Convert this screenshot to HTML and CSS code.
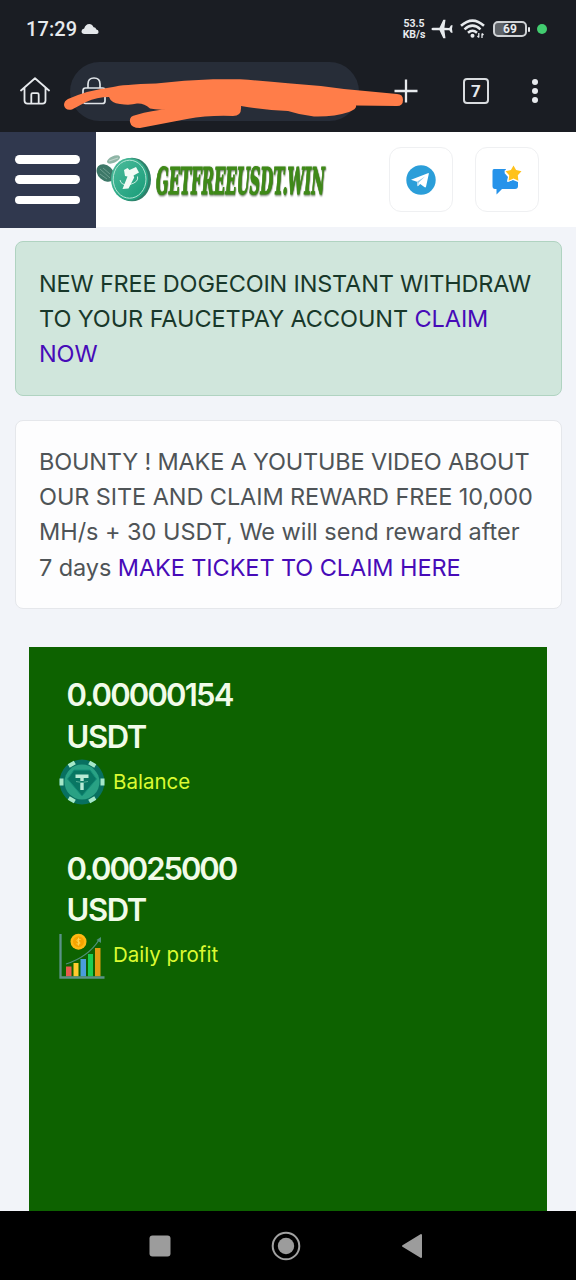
FILE: index.html
```html
<!DOCTYPE html>
<html lang="en">
<head>
<meta charset="utf-8">
<title>GetFreeUSDT.win</title>
<link rel="stylesheet" href="styles.css">
</head>
<body>
<div class="phone">
  <header class="browser">
    <div class="status">
      <span class="clock">17:29</span>
      <svg class="cloud" width="18" height="12" viewBox="0 0 18 12"><path d="M3.500 11Q.5 11 .5 8.300Q.5 6 3.200 5.500Q4.500 1 8.300 1Q11 1 12.600 4.200Q14.500 4 15.400 6.600Q17.600 7 17.600 9Q17.600 11 15.500 11Z" fill="#e4e7ea"/></svg>
      <span class="speed"><span>53.5</span><span>KB/s</span></span>
      <svg class="plane" width="22" height="20" viewBox="0 0 22 20"><path d="M.5 10Q.5 8.800 2 8.700H8.500L12.300 .7H14.500L13.400 8.700L18.300 8.900L20 6.300H21.600L21 10L21.600 13.700H20L18.300 11.200L13.400 11.300L14.500 19.300H12.300L8.500 11.300H2Q.5 11.200.5 10Z" fill="#e7eaed"/></svg>
      <svg class="wifi" width="26" height="20" viewBox="0 0 26 20" fill="none" stroke="#e7eaed" stroke-width="2.500"><path d="M1 6.800Q12.500-3.600 24 6.800M4.500 10.300Q12.500 3 20.500 10.300M8 13.700Q12.500 9.700 17 13.700"/><circle cx="12.500" cy="16.700" r="2" fill="#e7eaed" stroke="none"/><path d="M18.800 14V18.500M22 19V14.500M17.500 16.800L18.800 18.500M22 14.500L23.500 16" stroke-width="1.300"/></svg>
      <span class="battery">69</span>
      <span class="privacy"></span>
    </div>
    <div class="toolbar">
      <svg class="home" width="30" height="28" viewBox="0 0 30 28" fill="none" stroke="#e7eaed" stroke-width="1.800" stroke-linejoin="round" stroke-linecap="round"><path d="M1 13.500L15 1.200L29 13.500M4.500 11V23.500Q4.500 26.600 7.600 26.600H22.400Q25.500 26.600 25.500 23.500V11M11.300 26V17.500Q11.300 16.200 12.600 16.200H17.400Q18.700 16.200 18.700 17.500V26"/></svg>
      <div class="address">
        <svg width="24" height="28" viewBox="0 0 24 28" fill="none" stroke="#e0e4e8" stroke-width="1.700"><rect x="1" y="11" width="22" height="15.500" rx="2.500"/><path d="M6 11V7Q6 1 12 1Q18 1 18 7V11"/></svg>
      </div>
      <svg class="plus" width="24" height="24" viewBox="0 0 24 24" stroke="#e7eaed" stroke-width="2.300"><path d="M.5 12H23.500M12 .5V23.500"/></svg>
      <span class="tabs">7</span>
      <span class="dots"><i></i><i></i><i></i></span>
    </div>
    <svg class="scribble" width="350" height="56" viewBox="0 0 350 56"><path d="M4 23Q24 14 49 11Q58 8.500 92 7.500Q120 4 149 3.200H176Q202 5 224 7.200Q252 9 280 13L333 18Q339 18 339 24Q339 30 333 30L292 29.500Q293 33 285 36Q270 41 250 40.500Q236 39 224 35Q202 34 177 30Q178 40 169 40Q145 39 123 43L76 52Q67 52 66 46Q65 40 72 39Q88 34 103 33.500Q92 34 86 32.500Q80 27 73 27.500Q66 29.500 56 28Q47 27 45 21Q33 21 22 26L8 33.500Q1 35 0 29Q0 25 4 23Z" fill="#ff7d49"/></svg>
  </header>

  <div class="site-header">
    <div class="menu"><i></i><i></i><i></i></div>
    <div class="logo">
      <svg class="coin" width="58" height="52" viewBox="0 0 58 52">
        <defs><linearGradient id="coin" x1="0" y1="0" x2="1" y2="1"><stop offset="0" stop-color="#4fbd9d"/><stop offset="1" stop-color="#159a76"/></linearGradient></defs>
        <ellipse cx="17.500" cy="5.500" rx="7" ry="3.300" transform="rotate(-24 17.500 5.500)" fill="#8fb5a6"/><path d="M13 7L22 4" stroke="#c0d4cb" stroke-width="1.300"/>
        <ellipse cx="9.500" cy="19" rx="10" ry="7.500" transform="rotate(42 9.500 19)" fill="#3d7868"/><path d="M4 15L14 24M4 20L11 25M7 14L14 20" stroke="#7aa899" stroke-width=".8"/>
        <ellipse cx="36" cy="25.500" rx="19" ry="21.800" fill="#2e806a"/>
        <ellipse cx="33.600" cy="25.200" rx="18.600" ry="21.300" fill="url(#coin)"/>
        <ellipse cx="33.600" cy="25.200" rx="16.400" ry="19" fill="none" stroke="#b5e5d4" stroke-width="1"/>
        <path d="M24 26Q25 32 34 30.500Q43 28 41.500 22.500" fill="none" stroke="#caeedf" stroke-width="1"/>
        <path d="M28 16L31.500 14L33.500 16L40 13L43 18.500L37.500 21.500L38.200 23.500L32.500 34.500L26.500 35L31.500 22.500L29 22Z" fill="#f2fbf5"/>
      </svg>
      <svg class="wordmark" width="184" height="52" viewBox="0 0 460 52" preserveAspectRatio="none"><text x="0" y="35.500" textLength="422" lengthAdjust="spacingAndGlyphs" class="word">GETFREEUSDT.WIN</text></svg>
    </div>
    <div class="shortcuts">
      <span class="shortcut"><svg width="30" height="30" viewBox="0 0 30 30"><circle cx="15" cy="15" r="14.700" fill="#2b9ed9"/><path d="M5 14.700L22.500 8Q23 8 22.800 9L20 21.700Q19.500 23 18.300 22.100L14.200 19L12.200 21Q11.500 21.500 11.400 20.500L11 16.800Z" fill="#fff"/><path d="M11 16.800L19 11.400L12.500 17.700L12.200 21" fill="#8fc8e8"/></svg></span>
      <span class="shortcut"><svg width="32" height="30" viewBox="0 0 32 30"><path d="M3 4H15L13.500 8L17 12L16 17L22 15L27 17V21Q27 24 24 24H11L5.500 29.500V24H4Q1.500 24 1.500 21V6Q1.500 4 3 4Z" fill="#2693ea"/><path d="M22.500.5L25.100 5.100L30.500 6.200L26.800 10.300L27.400 15.700L22.500 13.400L17.600 15.700L18.200 10.300L14.500 6.200L19.900 5.100Z" fill="#ffc21c" stroke="#fff" stroke-width="2" stroke-linejoin="round" paint-order="stroke"/></svg></span>
    </div>
  </div>

  <main class="page">
    <div class="notice success"><span class="tight">NEW FREE DOGECOIN INSTANT WITHDRAW</span><br>TO YOUR FAUCETPAY ACCOUNT <a>CLAIM<br>NOW</a></div>
    <div class="notice bounty"><span class="tight">BOUNTY ! MAKE A YOUTUBE VIDEO ABOUT</span><br>OUR SITE AND CLAIM REWARD FREE 10,000<br><span class="loose">MH/s + 30 USDT, We will send reward after</span><br>7 days <a>MAKE TICKET TO CLAIM HERE</a></div>
    <section class="stats">
      <div class="stat">
        <div class="amount"><span class="digits">0.00000154</span><br>USDT</div>
        <div class="label">
          <svg width="46" height="46" viewBox="0 0 46 46"><circle cx="23" cy="23" r="22.500" fill="#087060"/><g stroke="#a5e8c8" stroke-width="7"><path id="mark" d="M.5 23H4.500M41.500 23H45.500"/><path d="M.5 23H4.500M41.500 23H45.500" transform="rotate(60 23 23)"/><path d="M.5 23H4.500M41.500 23H45.500" transform="rotate(120 23 23)"/></g><circle cx="23" cy="23" r="17.500" fill="#29a184"/><path d="M15 11H31L37.500 20L23 37L8.500 20Z" fill="#087663" stroke="#14917a"/><path d="M16.500 15.500H29.500V19H24.700V22H21.300V19H16.500ZM21.300 24H24.700V31H21.300Z" fill="#b8ead6"/><path d="M17 22.500Q23 24.500 29 22.500" fill="none" stroke="#68bea2" stroke-width=".8"/></svg>
          <span>Balance</span>
        </div>
      </div>
      <div class="stat">
        <div class="amount"><span class="digits profit">0.00025000</span><br>USDT</div>
        <div class="label">
          <svg width="46" height="46" viewBox="0 0 46 46"><g><rect x="7" y="33.500" width="5.500" height="10" fill="#e95b4e"/><rect x="14.500" y="30" width="5" height="13.500" fill="#ffcb2e"/><rect x="21.500" y="26" width="5.500" height="17.500" fill="#4a9ddd"/><rect x="29" y="21" width="5" height="22.500" fill="#1dcc52"/><rect x="36" y="15" width="5.500" height="28.500" fill="#e29b13"/></g><path d="M1.500 1V44.500H45.500" fill="none" stroke="#5b9287" stroke-width="2.300"/><path d="M7 31Q29 24 40 7" fill="none" stroke="#4e907a" stroke-width="1.300"/><path d="M42 4V10L37.500 7Z" fill="#4e907a"/><circle cx="19.500" cy="8.700" r="8" fill="#ffb913"/><circle cx="19.500" cy="8.700" r="5.500" fill="#f6a400"/><path d="M21.500 6.500Q17.500 5.500 18 8Q21.500 8.500 21 10.500Q19.500 12 17.500 10.700M19.500 4.700V12.600" fill="none" stroke="#ffd24a" stroke-width="1"/></svg>
          <span>Daily profit</span>
        </div>
      </div>
    </section>
  </main>

  <nav class="system-nav">
    <svg width="22" height="22" viewBox="0 0 22 22"><rect x=".5" y=".5" width="21" height="21" rx="3" fill="#9c9c9c"/></svg>
    <svg width="30" height="30" viewBox="0 0 30 30"><circle cx="15" cy="15" r="13.300" fill="none" stroke="#a2a2a2" stroke-width="2"/><circle cx="15" cy="15" r="8.200" fill="#9c9c9c"/></svg>
    <svg width="22" height="26" viewBox="0 0 22 26"><path d="M2 13L20 2V24Z" fill="#9c9c9c" stroke="#9c9c9c" stroke-width="2" stroke-linejoin="round"/></svg>
  </nav>
</div>
</body>
</html>
```
FILE: styles.css
```css
* { box-sizing: border-box; }
body { margin: 0; font-family: Inter, sans-serif; background: #f2f4f9; }
svg { display: block; flex: none; }
.phone { width: 576px; height: 1280px; display: flex; flex-direction: column; overflow: hidden; }

.browser { position: relative; height: 132px; flex: none; background: #1a1d23; color: #e7eaed; font-family: Roboto, sans-serif; }
.status { display: flex; align-items: center; height: 58px; padding-left: 26px; }
.clock { width: 50px; font-size: 20px; font-weight: 500; letter-spacing: .1px; white-space: nowrap; }
.cloud { margin-left: 5px; }
.speed { display: flex; flex-direction: column; width: 24px; margin-left: 303px; font-size: 10.500px; line-height: 10.500px; font-weight: 700; text-align: center; white-space: nowrap; margin-top: 1px; }
.plane { margin-left: 5px; }
.wifi { margin-left: 7px; }
.battery { position: relative; margin-left: 7px; width: 34px; height: 16px; border: 2px solid #cfd2d5; border-radius: 5px; background: linear-gradient(90deg, #5f6368 25%, #26292f 45%); text-align: center; font-size: 12px; line-height: 13px; font-weight: 700; }
.battery::after { content: ""; position: absolute; right: -5px; top: 4px; width: 2px; height: 5px; background: #e7eaed; border-radius: 1px; }
.privacy { width: 10px; height: 10px; margin-left: 10px; border-radius: 50%; background: #42cd70; }

.toolbar { display: flex; align-items: center; height: 66px; padding-left: 20px; }
.address { width: 289px; height: 59px; margin-left: 20px; padding: 15px 0 0 12px; border-radius: 30px; background: #272d38; }
.plus { margin-left: 35px; }
.tabs { width: 26px; height: 26px; margin-left: 45px; border: 2px solid #d9dcdf; border-radius: 4px; text-align: center; font-size: 17px; line-height: 22px; font-weight: 700; }
.dots { display: flex; flex-direction: column; gap: 3px; margin-left: 43px; }
.dots i { width: 6px; height: 6px; border-radius: 50%; background: #e7eaed; }
.scribble { position: absolute; left: 64px; top: 76px; }

.site-header { height: 95px; flex: none; display: flex; background: #fff; }
.menu { width: 96px; height: 96px; padding: 23px 16px 0 15px; display: flex; flex-direction: column; gap: 11.500px; background: #30384e; }
.menu i { height: 8.800px; border-radius: 5px; background: #fff; }
.logo { width: 293px; display: flex; padding-top: 22px; }
.wordmark { margin: 5px 0 0 2px; }
.word { font-family: "DejaVu Serif", serif; font-weight: 700; font-style: italic; font-size: 37px; fill: #3f8a18; stroke: #3f8a18; stroke-width: 1.200px; filter: drop-shadow(1px 1px 1px #4c6142); }
.shortcuts { display: flex; gap: 22px; padding-top: 15px; }
.shortcut { display: flex; align-items: center; justify-content: center; width: 64px; height: 65px; border: 1px solid #eff0f2; border-radius: 12px; }

.page { flex: 1; min-height: 0; padding: 14px 14px 0 15px; display: flex; flex-direction: column; }
.notice { flex: none; padding: 24px 23px; border: 1px solid; border-radius: 8px; font-size: 23.500px; line-height: 35.200px; letter-spacing: -.09px; white-space: nowrap; }
.notice a { color: #470bb8; }
.tight { letter-spacing: -.18px; }
.loose { letter-spacing: -.03px; }
.success { height: 155px; background: #d0e6dc; border-color: #b0d3c1; color: #18382a; }
.bounty { height: 189px; margin-top: 24px; padding-top: 23px; background: #fdfdfe; border-color: #e5e7eb; color: #4f5457; }
.stats { flex: 1; margin: 38px 15px 0 14px; padding: 27px 0 0 30px; background: #0d6200; }
.stat { height: 173.500px; }
.amount { padding-left: 7.500px; color: #f1fbe9; font-size: 31px; line-height: 41.500px; font-weight: 600; letter-spacing: -1.400px; }
.digits { letter-spacing: -1.800px; }
.profit { letter-spacing: -2.050px; }
.label { display: flex; align-items: center; gap: 8px; height: 46px; margin-top: 1px; color: #dbfa32; font-size: 20.500px; }
.label svg { margin-top: 2px; }

.system-nav { flex: none; height: 69px; display: flex; align-items: center; background: #000; padding-left: 149px; }
.system-nav svg + svg { margin-left: 100px; }
```
